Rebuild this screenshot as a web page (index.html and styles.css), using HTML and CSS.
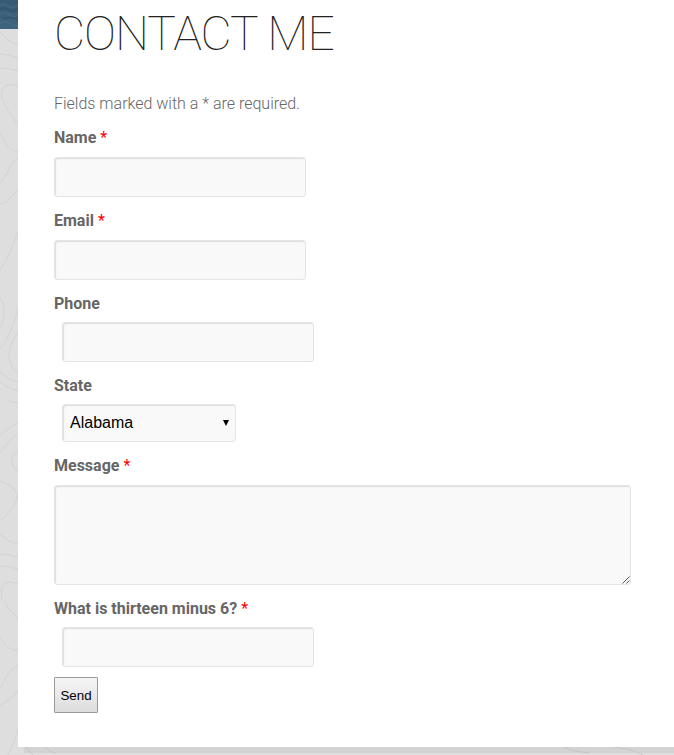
FILE: index.html
```html
<!doctype html>
<html lang="en">
    <head>
        <meta charset="utf-8">
        <title>Contact Me</title>
        <link rel="stylesheet" href="styles.css">
    </head>

    <body>
    <svg class="backdrop" width="674" height="755" viewBox="0 0 674 755" aria-hidden="true">
        <defs>
            <linearGradient id="sea" x1="0" y1="0" x2="0" y2="1">
                <stop offset="0" stop-color="#355a75"/>
                <stop offset="1" stop-color="#3f6480"/>
            </linearGradient>
        </defs>
        <!-- bottom of the header photo -->
        <rect width="18" height="29" fill="url(#sea)"/>
        <path d="M0 5Q4 3 8 6T18 5M0 14Q6 11 10 15T18 14M0 23Q5 20 11 24T18 22" fill="none" stroke="#537184" stroke-width="2" opacity=".4"/>
        <path d="M0 9Q5 7 9 10T18 9M3 19Q9 16 18 19" fill="none" stroke="#2b4b63" stroke-width="2" opacity=".4"/>
        <!-- contour lines -->
        <g class="contours">
            <path d="M0 32Q8 42 18 45"/>
            <path d="M0 54Q10 55 18 58"/>
            <path d="M0 68Q10 68 18 71"/>
            <path d="M18 87Q10 82 4 87Q0 92 2 99Q6 110 18 124"/>
            <path d="M0 132Q6 150 18 152"/>
            <path d="M0 183Q6 178 8 171Q10 163 18 158"/>
            <path d="M8 200Q12 194 18 191"/>
            <path d="M0 204Q6 203 9 200"/>
            <path d="M0 270Q12 252 18 231"/>
            <path d="M0 298Q4 302 4 314Q3 323 0 329"/>
            <path d="M0 349Q12 334 18 309"/>
            <path d="M18 332Q9 344 9 358Q11 368 18 374"/>
            <path d="M0 372Q8 380 18 382"/>
            <path d="M0 382Q8 389 18 391"/>
            <path d="M9 400Q13 403 18 403"/>
            <path d="M0 436Q8 427 18 423"/>
            <path d="M0 453Q8 439 18 434"/>
            <path d="M18 450Q9 458 13 466Q15 470 18 471"/>
            <path d="M0 481Q12 484 17 494Q18 506 0 521"/>
            <path d="M0 534Q8 542 18 544"/>
            <path d="M0 554Q8 554 18 557"/>
            <path d="M0 566Q10 566 18 569"/>
            <path d="M18 584Q8 580 3 585Q0 590 2 600"/>
            <path d="M4 600Q10 613 18 618"/>
            <path d="M0 638Q8 651 18 650"/>
            <path d="M0 689Q7 671 18 665"/>
            <path d="M0 705Q12 700 18 690"/>
            <path d="M8 755Q15 742 18 729"/>
        </g>
    </svg>
    <div class="page">
        <h1>CONTACT ME</h1>
        <form class="contact-form">
            <p class="note">Fields marked with a * are required.</p>
            <div class="field">
                <label for="name">Name <span class="required">*</span></label>
                <input type="text" id="name">
            </div>
            <div class="field">
                <label for="email">Email <span class="required">*</span></label>
                <input type="text" id="email">
            </div>
            <div class="field indented">
                <label for="phone">Phone</label>
                <input type="text" id="phone">
            </div>
            <div class="field indented">
                <label for="state">State</label>
                <div class="select">
                    <select id="state">
                        <option>Alabama</option>
                    </select>
                    <svg class="arrow" width="6" height="6" viewBox="0 0 6 6"><path d="M0 0H6L3 6Z"/></svg>
                </div>
            </div>
            <div class="field">
                <label for="message">Message <span class="required">*</span></label>
                <div class="message">
                    <textarea id="message"></textarea>
                    <svg class="grip" width="8" height="8" viewBox="0 0 8 8"><path d="M.5 7.5L7.5 .5M4.5 7.5L7.5 4.5"/></svg>
                </div>
            </div>
            <div class="field indented">
                <label for="answer">What is thirteen minus 6? <span class="required">*</span></label>
                <input type="text" id="answer">
            </div>
            <button type="button" class="send">Send</button>
        </form>
    </div>
    <!-- offset shadow and the lines that run through it -->
    <div class="page-shadow">
        <svg width="650" height="8" viewBox="0 0 650 8" aria-hidden="true">
            <path class="contour" d="M2 0Q5 4 9 8M20 0Q24 4 31 6M539 0Q550 5 565 6M590 0Q608 2 619 8"/>
        </svg>
    </div>
    </body>
</html>
```
FILE: styles.css
```css
* {
    box-sizing: border-box;
}
body {
    margin: 0;
    height: 755px;
    overflow: hidden;
    background: #dedede;
    color: #666;
    font: 300 16px/20px Roboto, sans-serif;
}
.backdrop {
    position: absolute;
    top: 0;
    left: 0;
    z-index: -1;
}
.contours,
.contour {
    fill: none;
    stroke: #d3d3d3;
    stroke-width: 1;
}
.page {
    height: 747px;
    margin-left: 18px;
    padding: 4px 36px 0;
    background: #fff;
}
h1 {
    margin: 0 0 30px;
    color: #222;
    font-size: 48px;
    font-weight: 100;
    letter-spacing: -1px;
    line-height: 60px;
}
.note {
    margin: 0 0 14px;
}
.field {
    margin-bottom: 14px;
}
label {
    display: block;
    margin-bottom: 9px;
    font-weight: 700;
}
.required {
    color: #f00;
    font-weight: 400;
}
input,
select,
textarea {
    display: block;
    width: 252px;
    height: 40px;
    margin: 0;
    padding: 6px;
    border: 1px solid #e5e5e5;
    border-radius: 3px;
    background: #f9f9f9;
    box-shadow: inset 1px 1px 1px #ddd;
    outline: none;
}
.indented label {
    margin-bottom: 8px;
}
.indented input,
.select {
    margin-left: 8px;
}
.select,
.message {
    position: relative;
}
.select {
    width: 174px;
}
select {
    appearance: none;
    width: 174px;
    height: 38px;
    padding: 0 7px 2px;
    color: #000;
    font: 16px "Liberation Sans", Arial, sans-serif;
}
.arrow {
    position: absolute;
    top: 16px;
    right: 7px;
}
.message {
    width: 577px;
}
textarea {
    width: 577px;
    height: 100px;
    resize: none;
}
.grip {
    position: absolute;
    right: 1px;
    bottom: 1px;
    fill: none;
    stroke: #555;
}
.send {
    display: block;
    width: 44px;
    height: 36px;
    margin-top: -4px;
    padding: 0;
    border: 1px solid #999;
    border-radius: 1px;
    background: linear-gradient(#f6f6f6, #dcdcdc);
    color: #000;
    font: 13.33px "Liberation Sans", Arial, sans-serif;
}
.page-shadow {
    height: 6px;
    margin-left: 24px;
    background: #d3d3d3;
}
.page-shadow svg {
    display: block;
}
.page-shadow .contour {
    stroke: #c6c6c6;
}
```
